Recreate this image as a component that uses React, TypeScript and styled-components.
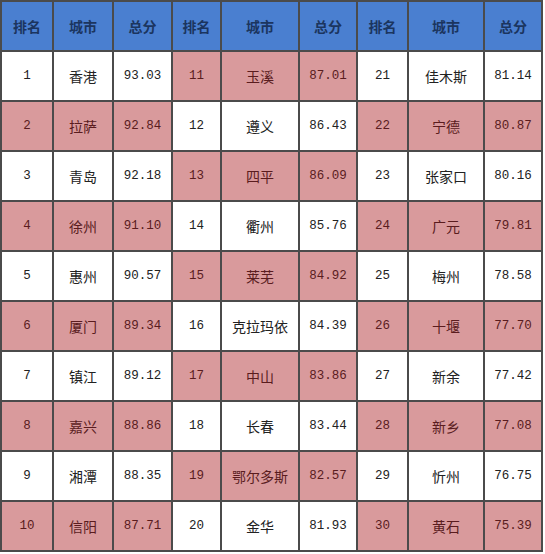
import React from 'react';
import styled, { createGlobalStyle } from 'styled-components';

const GlobalStyle = createGlobalStyle`
  html, body {
    margin: 0;
    padding: 0;
    background: #ffffff;
  }
`;

const rows: [string, string, string][][] = [
  [['1', '香港', '93.03'], ['11', '玉溪', '87.01'], ['21', '佳木斯', '81.14']],
  [['2', '拉萨', '92.84'], ['12', '遵义', '86.43'], ['22', '宁德', '80.87']],
  [['3', '青岛', '92.18'], ['13', '四平', '86.09'], ['23', '张家口', '80.16']],
  [['4', '徐州', '91.10'], ['14', '衢州', '85.76'], ['24', '广元', '79.81']],
  [['5', '惠州', '90.57'], ['15', '莱芜', '84.92'], ['25', '梅州', '78.58']],
  [['6', '厦门', '89.34'], ['16', '克拉玛依', '84.39'], ['26', '十堰', '77.70']],
  [['7', '镇江', '89.12'], ['17', '中山', '83.86'], ['27', '新余', '77.42']],
  [['8', '嘉兴', '88.86'], ['18', '长春', '83.44'], ['28', '新乡', '77.08']],
  [['9', '湘潭', '88.35'], ['19', '鄂尔多斯', '82.57'], ['29', '忻州', '76.75']],
  [['10', '信阳', '87.71'], ['20', '金华', '81.93'], ['30', '黄石', '75.39']],
];

const headers = ['排名', '城市', '总分'];

export default function App() {
  return (
    <>
      <GlobalStyle />
      <Grid>
        {[0, 1, 2].map((g) =>
          headers.map((h) => <HeadCell key={`h${g}${h}`}>{h}</HeadCell>)
        )}
        {rows.map((row, r) =>
          row.map((group, g) => {
            const pink = (r + g) % 2 === 1;
            return (
              <React.Fragment key={`${r}-${g}`}>
                <Cell $pink={pink} $mono>{group[0]}</Cell>
                <Cell $pink={pink}>{group[1]}</Cell>
                <Cell $pink={pink} $mono>{group[2]}</Cell>
              </React.Fragment>
            );
          })
        )}
      </Grid>
    </>
  );
}

const Grid = styled.div`
  display: grid;
  grid-template-columns: 50px 58px 57px 47px 76px 56px 49px 74px 56px;
  grid-auto-rows: 48px;
  gap: 2px;
  padding: 2px;
  width: max-content;
  background: #4b4b4b;
`;

const HeadCell = styled.div`
  display: flex;
  align-items: center;
  justify-content: center;
  background: #4a7fd0;
  color: #1b355f;
  font-family: 'Noto Sans CJK SC', sans-serif;
  font-weight: 700;
  font-size: 14px;
`;

const Cell = styled.div<{ $pink: boolean; $mono?: boolean }>`
  display: flex;
  align-items: center;
  justify-content: center;
  background: ${(p) => (p.$pink ? '#d99a9c' : '#ffffff')};
  color: ${(p) => (p.$pink ? '#5a1c1e' : '#222222')};
  font-family: ${(p) =>
    p.$mono
      ? "'Liberation Mono', monospace"
      : "'Noto Sans CJK SC', sans-serif"};
  font-size: ${(p) => (p.$mono ? '12.5px' : '14px')};
`;
